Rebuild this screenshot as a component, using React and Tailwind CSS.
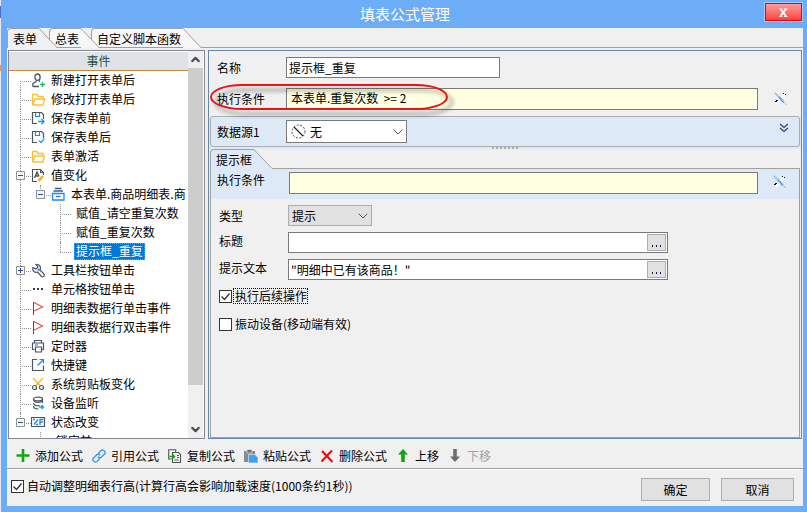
import React, { useState } from "react";
import { ChevronDown, ChevronUp } from "lucide-react";

const icons = {
  user: (
    <svg viewBox="0 0 15 15" className="h-[15px] w-[15px]" fill="none" stroke="#4b5563">
      <ellipse cx="6.500" cy="4.200" rx="2.600" ry="3.200" strokeWidth="1.300" />
      <path d="M5.500 7.500 4.500 9 2.500 10c-1 1-1 3.500 0 3.500H8M8 7.500l1 1.200" strokeWidth="1.300" />
      <path d="M11.500 9v5M9 11.500h5" stroke="#2bb673" strokeWidth="1.400" />
    </svg>
  ),
  folder: (
    <svg viewBox="0 0 15 15" className="h-[15px] w-[15px]" fill="none" stroke="#fbc02d" strokeWidth="1.300">
      <path d="M1.500 13V2.500h4.500l1 2h5V7M1.500 13h10.500l1.500-6H4L1.500 13" />
    </svg>
  ),
  saveBefore: (
    <svg viewBox="0 0 15 15" className="h-[15px] w-[15px]" fill="none" stroke="#4b5563" strokeWidth="1.200">
      <path d="M6 12.500H1.500v-11h9l2 2V8" />
      <path d="M4.500 2v3.500h4V2" stroke="#1e88e5" />
      <path d="M7 10.500h5M10.500 8l2.500 2.500-2.500 2.500" stroke="#1e9bf0" strokeWidth="1.500" />
    </svg>
  ),
  saveAfter: (
    <svg viewBox="0 0 15 15" className="h-[15px] w-[15px]" fill="none" stroke="#4b5563" strokeWidth="1.200">
      <path d="M6 12.500H1.500v-11h9l2 2V8" />
      <path d="M4.500 2v3.500h4V2" stroke="#1e88e5" />
      <path d="m8 10.500 2 2 3.500-4" stroke="#1e9bf0" strokeWidth="1.300" />
    </svg>
  ),
  value: (
    <svg viewBox="0 0 15 15" className="h-[15px] w-[15px]" fill="none" stroke="#4b5563" strokeWidth="1.100">
      <path d="M6 13.500H1.500v-12h8l3 3V7M9.500 1.500v3h3" />
      <path d="m3.500 10 2.500-6 2 4.500M4.500 8h3" strokeWidth="1.400" />
      <path d="m7.500 13 4.500-5" stroke="#f5b731" strokeWidth="2.800" />
    </svg>
  ),
  box: (
    <svg viewBox="0 0 15 15" className="h-[15px] w-[15px]" fill="none" stroke="#1e88e5" strokeWidth="1.300">
      <path d="M1.500 6.500h11.500v6.500H1.500zM5 9.500h4.500" />
      <path d="M4 1.500h6.500M2.500 4h9.500" stroke="#3b5f8a" />
    </svg>
  ),
  wrench: (
    <svg viewBox="0 0 15 15" className="h-[15px] w-[15px]" fill="none" stroke="#4b5563" strokeWidth="1.200">
      <path d="M5 1.500 7 4 5 6 2 4.500C1 8 4 10 6.500 9l4 4.500c1.500 1 3.500-.5 2.500-2.500L9 7C10.500 3.500 8 1 5 1.500z" />
      <path d="m7 7.500 1.500-1.500" stroke="#1e88e5" strokeWidth="2" />
    </svg>
  ),
  dots: (
    <svg viewBox="0 0 15 15" className="h-[15px] w-[15px]" fill="#333b4a">
      <path d="M2 6h2v2H2zM6 6h2v2H6zM10 6h2v2h-2z" />
    </svg>
  ),
  flag: (
    <svg viewBox="0 0 15 15" className="h-[15px] w-[15px]" fill="none">
      <path d="M2.500 1v13" stroke="#4b5563" />
      <path d="m3 1.500 8.500 4.500L3 10" stroke="#f0524a" strokeWidth="1.200" />
    </svg>
  ),
  printer: (
    <svg viewBox="0 0 15 15" className="h-[15px] w-[15px]" fill="none" stroke="#4b5563" strokeWidth="1.200">
      <path d="M3.500 4V1.500h7V4M3.500 10.500h-2v-6.500h11v6.500H11" />
      <path d="M4.500 8h6v5h-6z" />
      <path d="M4 6h3" stroke="#1e9bf0" />
    </svg>
  ),
  shortcut: (
    <svg viewBox="0 0 15 15" className="h-[15px] w-[15px]" fill="none" stroke="#4b5563" strokeWidth="1.200">
      <path d="M6 1.500H1.500v11h11V7.500" />
      <path d="m6.500 7.500 6-6M8.500 1.500h4v4" stroke="#1e88e5" />
    </svg>
  ),
  scissors: (
    <svg viewBox="0 0 15 15" className="h-[15px] w-[15px]" fill="none" stroke="#4b5563" strokeWidth="1.200">
      <path d="m2 1 7.500 8M12 1 4.500 9" stroke="#fbb117" />
      <circle cx="3.500" cy="10.500" r="2" />
      <circle cx="10.500" cy="10.500" r="2" />
    </svg>
  ),
  device: (
    <svg viewBox="0 0 15 15" className="h-[15px] w-[15px]" fill="none" stroke="#4b5563" strokeWidth="1.200">
      <ellipse cx="7" cy="3" rx="4.500" ry="1.800" />
      <path d="M2.500 3c0 4.500 9 4.500 9 0v4M2.500 7c0 2.500 3 3 6 2.500M2.500 10c0 2.500 2 3 5 3" />
      <path d="M8 11h4M10.500 9l2 2-2 2" stroke="#1e9bf0" strokeWidth="1.400" />
    </svg>
  ),
  state: (
    <svg viewBox="0 0 15 15" className="h-[15px] w-[15px]" fill="none" stroke="#4b5563">
      <path d="M.5 2.500h13v9H.5z" strokeWidth="1.200" />
      <path d="M2 4.500h2M7 4.500 3 9.500M5 9.500h2M9 10V4.500h3.500M9 7h3" stroke="#1e88e5" strokeWidth="1.300" />
    </svg>
  ),
};

const toolIcons = {
  add: <path d="M7 0v13M.5 6.500h13" stroke="#12a512" strokeWidth="2.600" />,
  link: (
    <g stroke="#3f9be8" strokeWidth="1.400">
      <path d="m6 5 3-3.500c1.500-1.500 5 .5 4 3L9.500 8C8.500 9 6.500 9 6 7.500" />
      <path d="m8 9-3 3.500c-1.500 1.500-5-.5-4-3L4.500 6C5.500 5 7.500 5 8 6.500" />
    </g>
  ),
  copy: (
    <g stroke="#555" strokeWidth="1.100">
      <path d="M3.500 10H.7V.7h7v3" />
      <path d="M4.500 3.500h6l2 2v8h-8zM9 6.500h2M9 8.500h2M6.500 11h4" />
      <path d="M1.500 7.500h5M4.500 5.500l2 2-2 2" stroke="#12a512" strokeWidth="1.500" />
    </g>
  ),
  paste: (
    <g>
      <path d="M0 2h11v11H0z" fill="#858b91" />
      <path d="M3 .5h5V4H3z" fill="#70767c" stroke="#eee" strokeWidth=".6" />
      <path d="M4.500 5.500H11l3 3V14H4.500z" fill="#3fa0ee" stroke="#f0f0f0" strokeWidth=".6" />
    </g>
  ),
  remove: <path d="m2 2 10.500 11M12 1.500 1.500 12.500" stroke="#f00808" strokeWidth="2" />,
  up: <path d="M7 0 12 5.500H8.800V13H5.200V5.500H2z" fill="#12a512" />,
  down: <path d="M7 13 2 7.500h3.200V0h3.600v7.500H12z" fill="#6e6e6e" />,
};

// guides: one entry per level. first / mid / end carry the branch of the row itself
const rows = [
  { text: "新建打开表单后", icon: "user", guides: ["first"] },
  { text: "修改打开表单后", icon: "folder", guides: ["mid"] },
  { text: "保存表单前", icon: "saveBefore", guides: ["mid"] },
  { text: "保存表单后", icon: "saveAfter", guides: ["mid"] },
  { text: "表单激活", icon: "folder", guides: ["mid"] },
  { text: "值变化", icon: "value", guides: ["mid"], toggle: "minus" },
  { text: "本表单.商品明细表.商", icon: "box", guides: ["line", "end"], toggle: "minus" },
  { text: "赋值_请空重复次数", guides: ["line", "none", "mid"] },
  { text: "赋值_重复次数", guides: ["line", "none", "mid"] },
  { text: "提示框_重复", guides: ["line", "none", "end"] },
  { text: "工具栏按钮单击", icon: "wrench", guides: ["mid"], toggle: "plus" },
  { text: "单元格按钮单击", icon: "dots", guides: ["mid"] },
  { text: "明细表数据行单击事件", icon: "flag", guides: ["mid"] },
  { text: "明细表数据行双击事件", icon: "flag", guides: ["mid"] },
  { text: "定时器", icon: "printer", guides: ["mid"] },
  { text: "快捷键", icon: "shortcut", guides: ["mid"] },
  { text: "系统剪贴板变化", icon: "scissors", guides: ["mid"] },
  { text: "设备监听", icon: "device", guides: ["mid"] },
  { text: "状态改变", icon: "state", guides: ["end"], toggle: "minus" },
  { text: "锁定前", guides: ["none", "mid"] },
];

const tools = [
  { text: "添加公式", icon: "add" },
  { text: "引用公式", icon: "link" },
  { text: "复制公式", icon: "copy" },
  { text: "粘贴公式", icon: "paste" },
  { text: "删除公式", icon: "remove" },
  { text: "上移", icon: "up" },
  { text: "下移", icon: "down", disabled: true },
];

const lineStyles = {
  first: "top-1/2 bottom-0",
  mid: "inset-y-0",
  line: "inset-y-0",
  end: "top-0 bottom-1/2",
  none: "hidden",
};

const Guide = ({ type, last, toggle }) => (
  <span className={`relative h-full shrink-0 ${last ? "w-[11px]" : "w-5"}`}>
    <span className={`absolute left-0 border-l border-dotted border-[#909090] ${lineStyles[type]}`} />
    {last && <span className="absolute inset-x-0 top-1/2 border-t border-dotted border-[#909090]" />}
    {last && toggle && (
      <svg viewBox="0 0 9 9" className="absolute top-[5px] -left-1 h-[9px] w-[9px]">
        <path d="M.5.5h8v8h-8z" fill="#f6f6f6" stroke="#919191" />
        <path d={toggle === "plus" ? "M2 4.500h5M4.500 2v5" : "M2 4.500h5"} stroke="#2b4fa0" />
      </svg>
    )}
  </span>
);

const TreeRow = ({ row, selected, onSelect }) => (
  <li className="flex h-[19px] items-center pl-[11px]">
    {row.guides.map((type, i) => (
      <Guide key={i} type={type} last={i === row.guides.length - 1} toggle={row.toggle} />
    ))}
    {row.icon && <span className="w-[15px] shrink-0">{icons[row.icon]}</span>}
    <button
      onClick={onSelect}
      className={`ml-[3px] flex h-[17px] shrink-0 items-start border px-px leading-[13px] whitespace-nowrap ${
        selected ? "border-dotted border-[#e08a2c] bg-[#0078d7] text-white" : "border-transparent"
      }`}
    >
      {row.text}
    </button>
  </li>
);

const Slant = ({ fill }) => (
  <svg viewBox="0 0 18 20" className="h-5 w-[18px] shrink-0" fill={fill}>
    <path d="M0 0 18 20H0z" />
    <path d="M0 .5 18 19.500" stroke="#a0a0a0" />
  </svg>
);

const Tab = ({ text, active, order }) => (
  <button role="tab" aria-selected={active} className={`relative -mr-2 flex h-5 ${order}`}>
    <span
      className={`h-5 rounded-tl-sm border-t border-l border-[#a0a0a0] pr-[2px] pl-[5px] leading-5 ${
        active ? "bg-[#f0f0f0]" : "border-b bg-[#f7f7f7]"
      }`}
    >
      {text}
    </span>
    <Slant fill={active ? "#f0f0f0" : "#f7f7f7"} />
  </button>
);

const Checkbox = ({ text, checked, focused }) => (
  <label className="flex h-4 items-center">
    <span className="grid h-[13px] w-[13px]">
      <input
        type="checkbox"
        defaultChecked={checked}
        className="peer col-start-1 row-start-1 h-[13px] w-[13px] appearance-none border border-[#333] bg-white"
      />
      <svg
        viewBox="0 0 13 13"
        className="pointer-events-none invisible z-10 col-start-1 row-start-1 peer-checked:visible"
        fill="none"
        stroke="#333"
        strokeWidth="1.300"
      >
        <path d="m2.500 6.500 3 3 5-6" />
      </svg>
    </span>
    <span
      className={`ml-px h-4 border pl-px leading-[13px] whitespace-nowrap ${
        focused ? "border-dotted border-black" : "border-transparent"
      }`}
    >
      {text}
    </span>
  </label>
);

const ToolsButton = () => (
  <button aria-label="公式" className="h-[14px] w-[14px] shrink-0">
    <svg viewBox="0 0 14 14" className="h-[14px] w-[14px]" fill="none">
      <path d="M2 12 11 3" stroke="#fafafa" strokeWidth="3" />
      <path d="m1 1 7 7" stroke="#8ab6f2" strokeWidth="2" strokeDasharray="1.500 .6" />
      <path d="m5 5 5 5.500" stroke="#6aa5f5" strokeWidth="2" />
      <path d="m11 11 1.500 2" stroke="#8ab6f2" />
      <path d="M9 1h1v1H9zM11 2h1v1h-1zM1 9h2v1H1zM2 8h2v1H2z" fill="#111" />
    </svg>
  </button>
);

const MoreField = ({ id, label, value }) => (
  <div className="flex items-start">
    <label htmlFor={id} className="w-[69px] shrink-0 leading-[18px]">{label}</label>
    <div className="flex h-[21px] w-[380px] items-center border border-[#7a7a7a] bg-white pr-px">
      <input id={id} defaultValue={value} className="h-full min-w-0 flex-1 pb-px pl-[2px] outline-none" />
      <button aria-label={`${label}…`} className="flex h-[17px] w-[19px] items-end justify-center gap-[3px] border border-[#adadad] bg-[#e1e1e1] pb-[3px]">
        <span className="h-[2px] w-px bg-[#1a0a40]" />
        <span className="h-[2px] w-px bg-[#1a0a40]" />
        <span className="h-[2px] w-px bg-[#1a0a40]" />
      </button>
    </div>
  </div>
);

const App = () => {
  const [selected, setSelected] = useState(9);

  return (
    <div className="flex h-screen min-h-[512px] w-full overflow-hidden bg-[#6dacf7] font-['Noto_Sans_CJK_SC',sans-serif] text-[12px] leading-4 text-black">
      <div className="w-px shrink-0 bg-[#e6e8ee]">
        <div className="mt-[6px] h-3 bg-[#4a6fc0]" />
        <div className="mt-[47px] h-[6px] bg-[#e09a4a]" />
      </div>
      <div className="flex min-w-0 flex-1 flex-col pr-1 pb-[6px] pl-[6px]">
        <header className="grid h-7 shrink-0 grid-cols-[1fr_auto_1fr] items-center">
          <h1 className="col-start-2 text-[15px] leading-6 text-white">填表公式管理</h1>
          <button
            aria-label="关闭"
            className="mt-[3px] mr-px h-[18px] w-[37px] self-start justify-self-end border border-[#f00000] bg-linear-to-b from-[#ff9a9a] to-[#ff3c3c] text-white outline outline-[#a9c8f5]"
          >
            <svg viewBox="0 0 35 16" className="h-4 w-[35px]" fill="none" stroke="#fff">
              <path d="m14.500 5 5.500 7M20 5l-5.500 7" strokeWidth="2" />
              <path d="M13 5h3.500M18 5h3.500M13 12.500h3.500M18 12.500h3.500" strokeWidth="1" />
            </svg>
          </button>
        </header>

        <div className="flex min-h-0 flex-1 flex-col bg-[#f0f0f0]">
          <div role="tablist" className="flex h-5 shrink-0">
            <Tab text="表单" active order="z-30" />
            <Tab text="总表" order="z-20" />
            <Tab text="自定义脚本函数" order="z-10" />
            <span className="flex-1 border-b border-[#a0a0a0]" />
          </div>

          <main className="mt-[2px] flex min-h-0 flex-1 gap-[3px] pr-px pl-px">
            <section className="flex w-[197px] shrink-0 border border-[#828790] bg-white pr-px">
              <div className="flex min-w-0 flex-1 flex-col overflow-hidden">
                <h2 className="mt-px h-[19px] shrink-0 border-b border-[#c98a3a] bg-[#dfe3e8] text-center leading-[18px] text-[#23504c]">事件</h2>
                <ul className="min-h-0 flex-1 overflow-hidden">
                  {rows.map((row, i) => (
                    <TreeRow key={i} row={row} selected={i === selected} onSelect={() => setSelected(i)} />
                  ))}
                </ul>
              </div>
              <div className="flex w-[15px] shrink-0 flex-col bg-[#f0f0f0] text-[#505050]">
                <ChevronUp className="h-[17px] w-[15px] shrink-0 px-px" strokeWidth={4} />
                <div className="h-[82%] bg-[#cdcdcd]" />
                <ChevronDown className="mt-auto h-[17px] w-[15px] shrink-0 px-px" strokeWidth={4} />
              </div>
            </section>

            <section className="relative flex min-w-0 flex-1 flex-col border border-[#6687ad]">
              <div className="flex flex-col gap-[10px] pt-[6px] pr-[13px] pb-[6px] pl-2">
                <div className="flex items-center">
                  <label htmlFor="name" className="w-[69px] shrink-0">名称</label>
                  <input id="name" defaultValue="提示框_重复" className="h-[21px] w-[214px] border border-[#7a7a7a] bg-white px-[2px] pb-px outline-none" />
                </div>
                <div className="flex items-center">
                  <label htmlFor="condition" className="w-[69px] shrink-0">执行条件</label>
                  <input
                    id="condition"
                    defaultValue="本表单.重复次数  >= 2"
                    className="mr-4 h-[22px] min-w-0 flex-1 border border-[#7a7a7a] bg-[#ffffe1] px-1 pb-[3px] outline-none"
                  />
                  <ToolsButton />
                </div>
              </div>
              {/* red mark round the condition */}
              <div className="pointer-events-none absolute top-[33px] left-px h-[26px] w-[238px] rounded-[32px/13px] border-2 border-[#ee1111] drop-shadow-[5px_5px_2px_rgba(0,0,0,0.45)]" />

              <div className="bg-[#dde9f7] px-px">
                <div className="flex h-[31px] items-center rounded-[3px] border border-[#adadad] pr-[10px] pl-[6px]">
                  <label htmlFor="source" className="w-[69px] shrink-0">数据源1</label>
                  <div className="relative">
                    <select id="source" className="h-[23px] w-[121px] appearance-none border border-[#7a7a7a] bg-white pl-[23px] outline-none">
                      <option>无</option>
                    </select>
                    <svg viewBox="0 0 15 15" className="pointer-events-none absolute top-1 left-[5px] h-[15px] w-[15px]" fill="none" stroke="#222">
                      <circle cx="7.500" cy="7.500" r="6.500" strokeDasharray="2 1.500" strokeWidth=".8" />
                      <path d="m3 3 9 9" strokeWidth="1.200" />
                    </svg>
                    <ChevronDown className="pointer-events-none absolute top-1 right-px h-4 w-4 text-[#555]" strokeWidth={1.5} />
                  </div>
                  <button aria-label="展开" className="mt-[6px] ml-auto h-[10px] w-[10px] self-start">
                    <svg viewBox="0 0 10 10" className="h-[10px] w-[10px]" fill="none" stroke="#1f4280" strokeWidth="1.200">
                      <path d="m1 1 4 3.500L9 1M1 5l4 3.500L9 5" />
                    </svg>
                  </button>
                </div>
                <div className="flex h-[2px] justify-center gap-[2px]">
                  {[...Array(7)].map((_, i) => (
                    <span key={i} className="h-[2px] w-[2px] bg-[#adadad]" />
                  ))}
                </div>
              </div>

              <div className="flex min-h-0 flex-1 flex-col px-px">
                <div role="tablist" className="flex h-5 shrink-0">
                  <button role="tab" aria-selected="true" className="flex h-5">
                    <span className="h-5 rounded-tl-sm border-t border-l border-[#a0a0a0] bg-[#dde9f7] pr-[2px] pl-[5px] leading-5">提示框</span>
                    <Slant fill="#dde9f7" />
                  </button>
                  <span className="flex-1 border-b border-[#a0a0a0]" />
                </div>
                <div className="min-h-0 flex-1 border border-t-0 border-[#a0a0a0]">
                  <div className="flex h-[30px] items-start bg-[#dde9f7] pt-[3px] pr-3 pl-[6px]">
                    <label htmlFor="boxCondition" className="w-[72px] shrink-0">执行条件</label>
                    <input id="boxCondition" className="mr-[15px] h-[22px] min-w-0 flex-1 border border-[#7a7a7a] bg-[#ffffe1] px-1 outline-none" />
                    <span className="pt-[3px]">
                      <ToolsButton />
                    </span>
                  </div>
                  <div className="flex flex-col gap-[6px] pt-[6px] pl-2">
                    <div className="flex items-center">
                      <label htmlFor="type" className="w-[69px] shrink-0">类型</label>
                      <div className="relative">
                        <select id="type" className="h-[21px] w-[84px] appearance-none border border-[#adadad] bg-[#e1e1e1] pl-[3px] outline-none">
                          <option>提示</option>
                        </select>
                        <ChevronDown className="pointer-events-none absolute top-[3px] right-px h-4 w-4 text-[#555]" strokeWidth={1.5} />
                      </div>
                    </div>
                    <MoreField id="title" label="标题" value="" />
                    <MoreField id="hint" label="提示文本" value={'"明细中已有该商品！"'} />
                  </div>
                  <div className="flex flex-col items-start gap-3 pt-2 pl-2">
                    <Checkbox text="执行后续操作" checked focused />
                    <Checkbox text="振动设备(移动端有效)" />
                  </div>
                </div>
              </div>
            </section>
          </main>

          <div className="flex h-[29px] shrink-0 items-center gap-[9px] pt-[5px] pl-[9px]">
            {tools.map((tool) => (
              <button
                key={tool.text}
                disabled={tool.disabled}
                className="flex items-center gap-[5px] whitespace-nowrap disabled:text-[#a0a0a0]"
              >
                <svg viewBox="0 0 14 14" className="h-[14px] w-[14px]" fill="none">{toolIcons[tool.icon]}</svg>
                {tool.text}
              </button>
            ))}
          </div>

          <footer className="flex h-[38px] shrink-0 items-start border-t border-[#a0a0a0] pt-[9px] pr-[9px] pl-1 inset-shadow-[0_1px_#fff]">
            <Checkbox text="自动调整明细表行高(计算行高会影响加载速度(1000条约1秒))" checked />
            <button className="mr-[11px] ml-auto h-[23px] w-[69px] border border-[#adadad] bg-[#e1e1e1]">确定</button>
            <button className="h-[23px] w-[73px] border border-[#adadad] bg-[#e1e1e1]">取消</button>
          </footer>
        </div>
      </div>
    </div>
  );
};

export default App;
